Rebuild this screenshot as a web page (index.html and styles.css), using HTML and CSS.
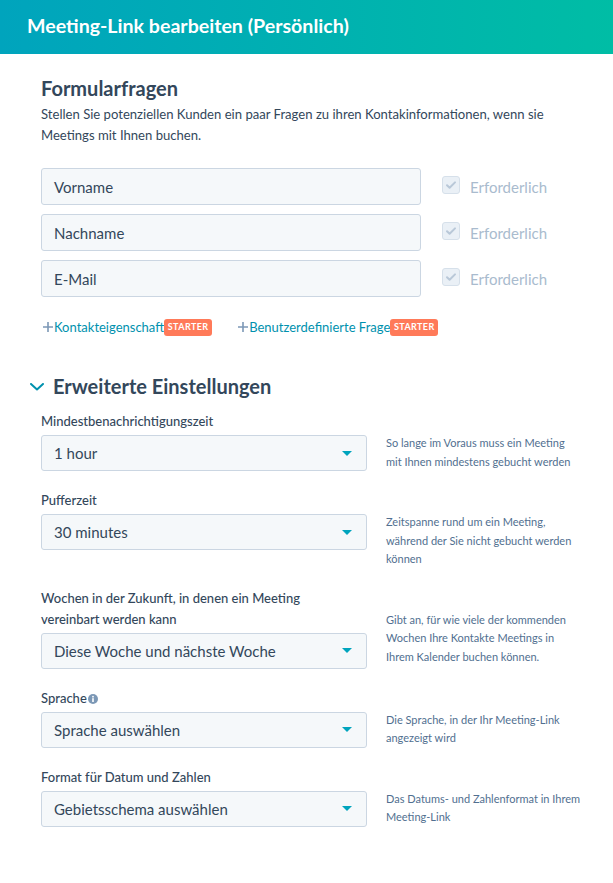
FILE: index.html
```html
<!DOCTYPE html>
<html lang="de">
<head>
<meta charset="utf-8">
<title>Meeting-Link bearbeiten</title>
<link rel="stylesheet" href="styles.css">
</head>
<body>
<header class="topbar">
  <h1 class="topbar-title">Meeting-Link bearbeiten (Persönlich)</h1>
</header>
<main class="content">
  <section class="questions">
    <h2 class="section-title">Formularfragen</h2>
    <p class="intro">Stellen Sie potenziellen Kunden ein paar Fragen zu ihren Kontakinformationen, wenn sie Meetings mit Ihnen buchen.</p>
    <div class="question-list">
      <div class="question">
        <div class="text-input">Vorname</div>
        <label class="required"><span class="checkbox"><svg viewBox="0 0 18 18" width="18" height="18"><path d="M5 9.2l2.6 2.6L13 6.4" fill="none" stroke="#b9c8d8" stroke-width="2" stroke-linecap="round" stroke-linejoin="round"/></svg></span>Erforderlich</label>
      </div>
      <div class="question">
        <div class="text-input">Nachname</div>
        <label class="required"><span class="checkbox"><svg viewBox="0 0 18 18" width="18" height="18"><path d="M5 9.2l2.6 2.6L13 6.4" fill="none" stroke="#b9c8d8" stroke-width="2" stroke-linecap="round" stroke-linejoin="round"/></svg></span>Erforderlich</label>
      </div>
      <div class="question">
        <div class="text-input">E-Mail</div>
        <label class="required"><span class="checkbox"><svg viewBox="0 0 18 18" width="18" height="18"><path d="M5 9.2l2.6 2.6L13 6.4" fill="none" stroke="#b9c8d8" stroke-width="2" stroke-linecap="round" stroke-linejoin="round"/></svg></span>Erforderlich</label>
      </div>
    </div>
    <div class="add-links">
      <a class="add-link"><svg class="plus" viewBox="0 0 10 10" width="10" height="10"><path d="M5 0v10M0 5h10" stroke="#7c98b6" stroke-width="1.6"/></svg>Kontakteigenschaft<span class="badge">Starter</span></a>
      <a class="add-link"><svg class="plus" viewBox="0 0 10 10" width="10" height="10"><path d="M5 0v10M0 5h10" stroke="#7c98b6" stroke-width="1.6"/></svg>Benutzerdefinierte Frage<span class="badge">Starter</span></a>
    </div>
  </section>

  <section class="advanced">
    <h2 class="advanced-title"><svg class="chevron" viewBox="0 0 14 8" width="14" height="8"><path d="M1 1l6 5.5L13 1" fill="none" stroke="#0091ae" stroke-width="2" stroke-linecap="round" stroke-linejoin="round"/></svg>Erweiterte Einstellungen</h2>

    <div class="field-row">
      <div class="field">
        <div class="field-label">Mindestbenachrichtigungszeit</div>
        <div class="select"><span>1 hour</span><span class="caret"></span></div>
      </div>
      <p class="help">So lange im Voraus muss ein Meeting mit Ihnen mindestens gebucht werden</p>
    </div>

    <div class="field-row">
      <div class="field">
        <div class="field-label">Pufferzeit</div>
        <div class="select"><span>30 minutes</span><span class="caret"></span></div>
      </div>
      <p class="help">Zeitspanne rund um ein Meeting, während der Sie nicht gebucht werden können</p>
    </div>

    <div class="field-row">
      <div class="field">
        <div class="field-label">Wochen in der Zukunft, in denen ein Meeting<br>vereinbart werden kann</div>
        <div class="select"><span>Diese Woche und nächste Woche</span><span class="caret"></span></div>
      </div>
      <p class="help">Gibt an, für wie viele der kommenden Wochen Ihre Kontakte Meetings in Ihrem Kalender buchen können.</p>
    </div>

    <div class="field-row">
      <div class="field">
        <div class="field-label">Sprache<svg class="info" viewBox="0 0 10 10" width="10" height="10"><circle cx="5" cy="5" r="5" fill="#7c98b6"/><rect x="4.2" y="4.2" width="1.6" height="3.8" fill="#fff"/><circle cx="5" cy="2.7" r="0.9" fill="#fff"/></svg></div>
        <div class="select"><span>Sprache auswählen</span><span class="caret"></span></div>
      </div>
      <p class="help">Die Sprache, in der Ihr Meeting-Link angezeigt wird</p>
    </div>

    <div class="field-row">
      <div class="field">
        <div class="field-label">Format für Datum und Zahlen</div>
        <div class="select"><span>Gebietsschema auswählen</span><span class="caret"></span></div>
      </div>
      <p class="help">Das Datums- und Zahlenformat in Ihrem Meeting-Link</p>
    </div>
  </section>
</main>
</body>
</html>
```

FILE: styles.css
```css
* { box-sizing: border-box; }

body {
  margin: 0;
  background: #fff;
  font-family: Lato, "Open Sans", "Noto Sans", sans-serif;
  color: #33475b;
}

.topbar {
  height: 54px;
  display: flex;
  align-items: center;
  padding: 0 0 3px 27px;
  background: linear-gradient(90deg, #00a4bd 0%, #00bda5 100%);
}

.topbar-title {
  margin: 0;
  color: #fff;
  font-size: 19.6px;
  font-weight: 700;
}

.content {
  padding: 22px 41px 40px;
}

.section-title {
  margin: 0;
  font-size: 20px;
  line-height: 24px;
  font-weight: 700;
  color: #33475b;
}

.intro {
  margin: 4px 0 0;
  font-size: 13.1px;
  line-height: 21px;
  color: #33475b;
}

.question-list {
  margin-top: 22px;
  display: flex;
  flex-direction: column;
  gap: 9px;
}

.question {
  display: flex;
  align-items: center;
}

.text-input {
  width: 380px;
  height: 37px;
  display: flex;
  align-items: center;
  padding: 0 12px;
  background: #f5f8fa;
  border: 1px solid #cbd6e2;
  border-radius: 3px;
  font-size: 15px;
  color: #33475b;
}

.required {
  display: flex;
  align-items: center;
  margin-left: 21px;
  font-size: 15px;
  color: #a9bbce;
}

.checkbox {
  width: 18px;
  height: 18px;
  margin-right: 10px;
  display: flex;
  background: #eaf0f6;
  border: 1px solid #d6e0ea;
  border-radius: 3px;
  margin-top: -4px;
}

.checkbox svg { margin: -1px; }

.add-links {
  margin-top: 20px;
  display: flex;
  gap: 24px;
}

.add-link {
  display: flex;
  align-items: center;
  font-size: 13px;
  line-height: 20px;
  color: #0091ae;
  cursor: pointer;
}

.plus { margin: 0 1px 0 2px; }

.badge {
  display: inline-flex;
  align-items: center;
  justify-content: center;
  width: 48px;
  height: 17px;
  background: #ff7a59;
  color: #fff;
  border-radius: 3px;
  font-size: 9px;
  font-weight: 700;
  letter-spacing: 0.4px;
  text-transform: uppercase;
}

.advanced-title {
  margin: 37px 0 13px -11px;
  display: flex;
  align-items: center;
  gap: 9px;
  font-size: 20px;
  line-height: 24px;
  font-weight: 700;
  color: #33475b;
}

.chevron { margin-top: 2px; }

.field-row {
  display: flex;
  align-items: flex-start;
  margin-bottom: 19px;
}

.field { width: 326px; flex: none; }

.field-label {
  display: block;
  font-size: 13px;
  line-height: 21px;
  font-weight: 500;
  color: #33475b;
  margin-bottom: 3px;
}

.info { margin-left: 1px; vertical-align: -1px; }

.select {
  height: 36px;
  display: flex;
  align-items: center;
  justify-content: space-between;
  padding: 0 14px 0 12px;
  background: #f5f8fa;
  border: 1px solid #cbd6e2;
  border-radius: 3px;
  font-size: 15px;
  color: #33475b;
}

.caret {
  width: 0;
  height: 0;
  border-left: 5px solid transparent;
  border-right: 5px solid transparent;
  border-top: 5px solid #00a4bd;
}

.help {
  flex: none;
  margin: 23px 0 0 19px;
  width: 195px;
  font-size: 11px;
  line-height: 18.5px;
  color: #516f90;
}
```
